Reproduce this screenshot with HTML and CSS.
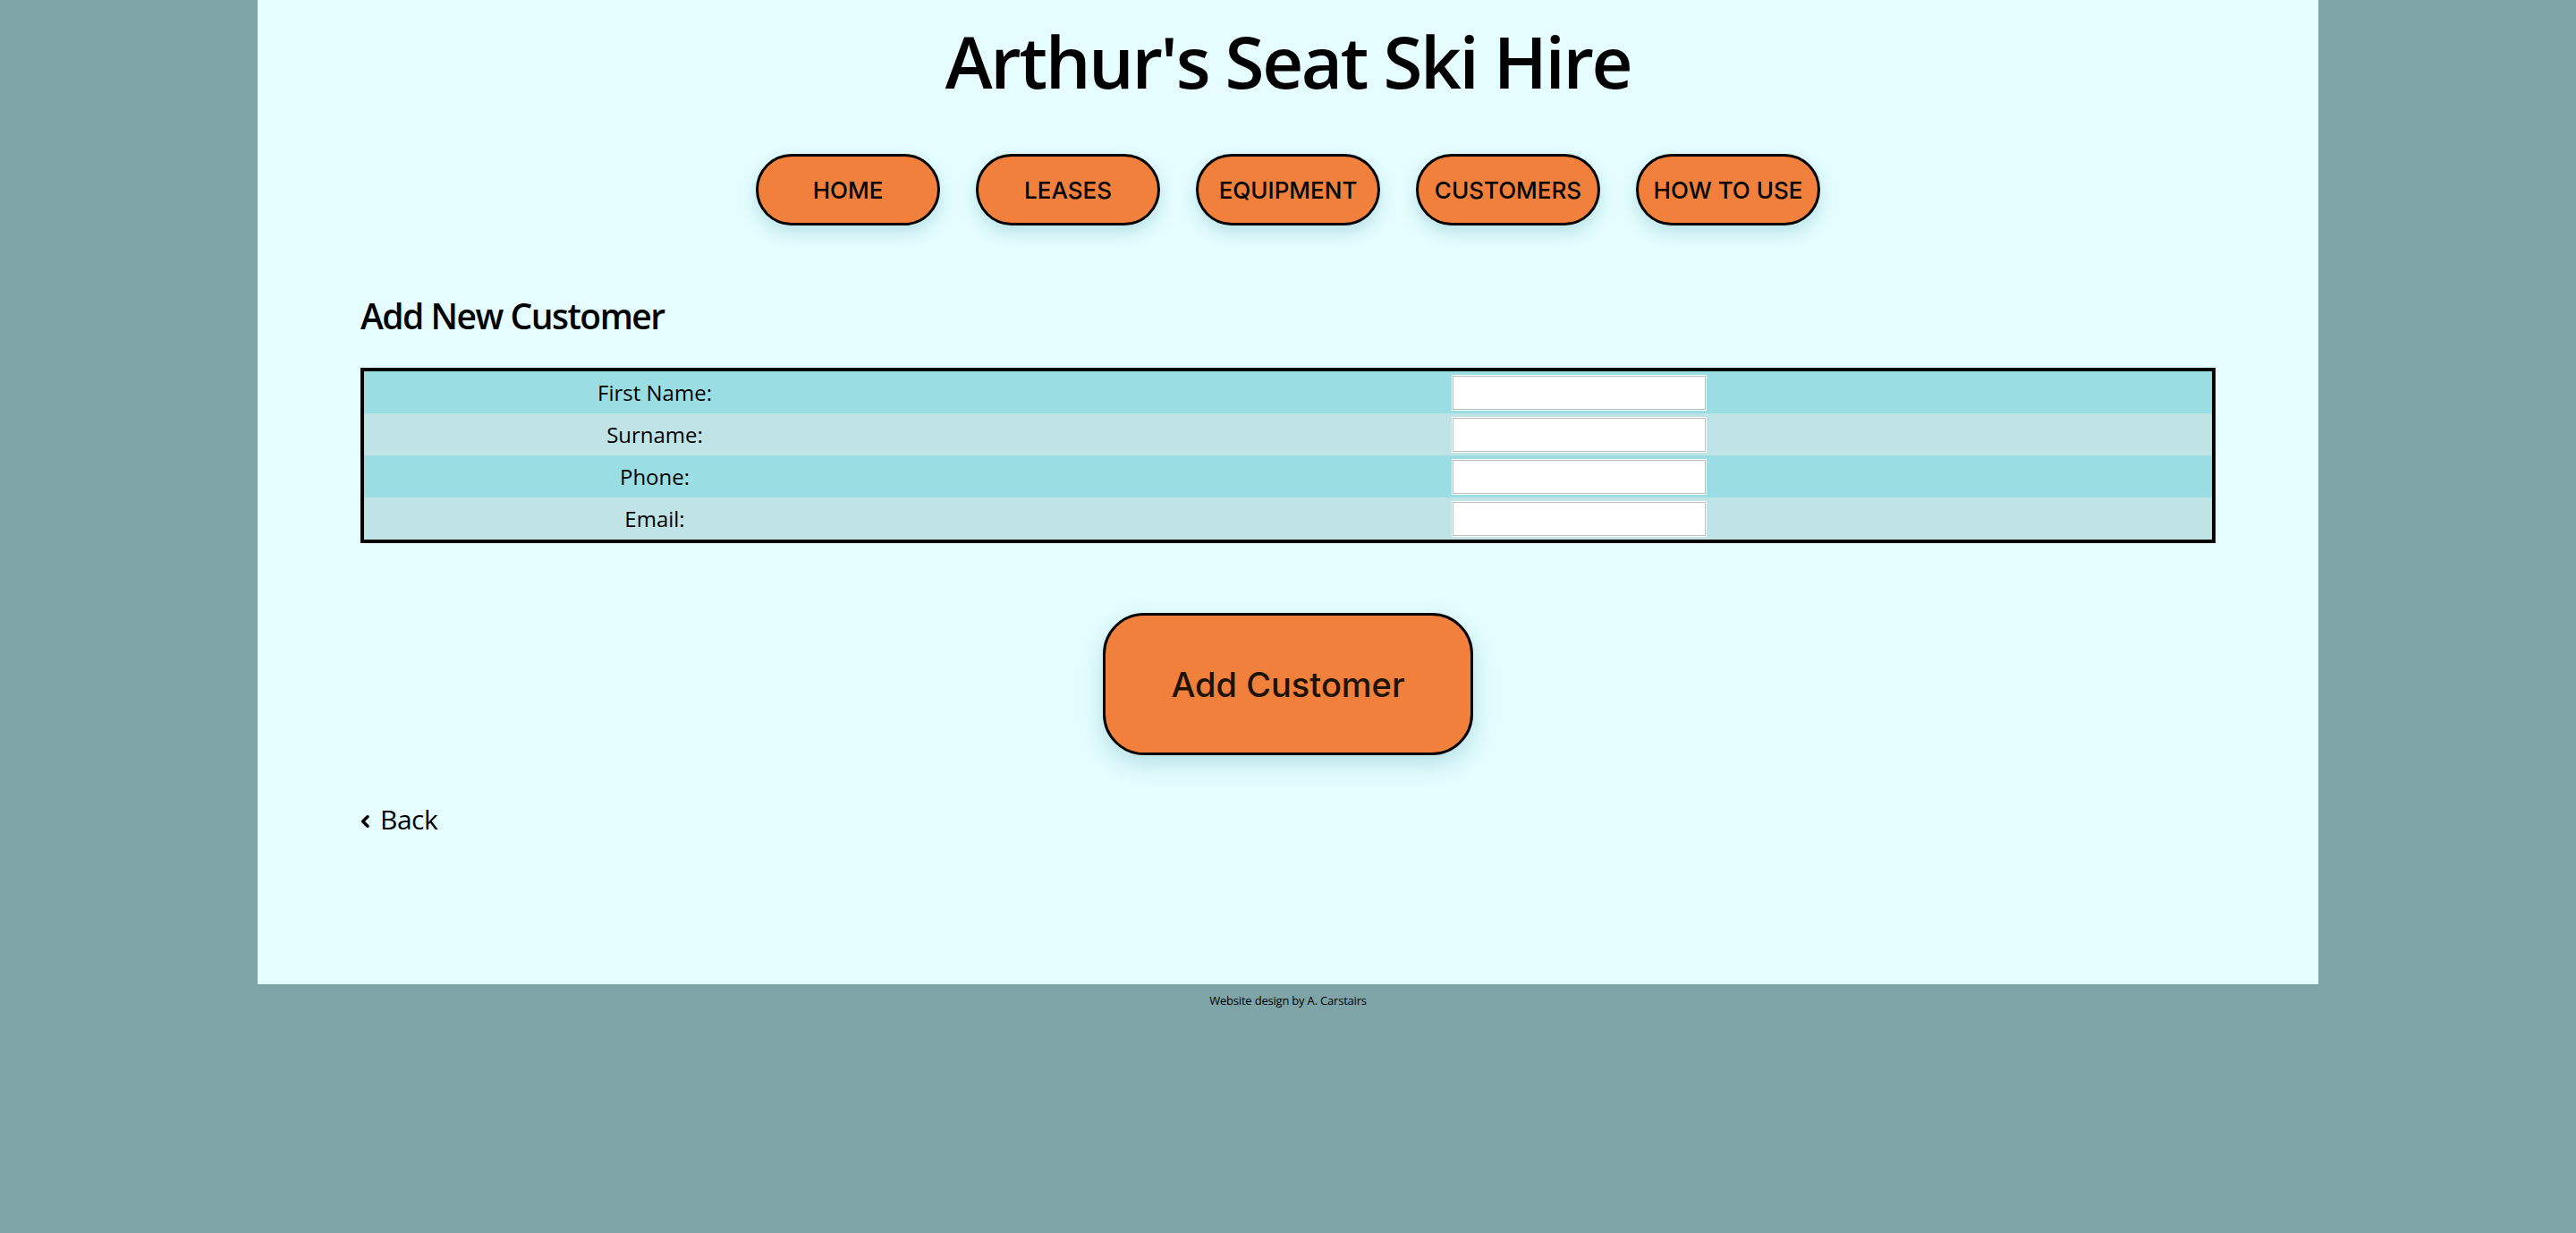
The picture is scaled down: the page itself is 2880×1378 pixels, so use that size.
FILE: index.html
```html
<!DOCTYPE html>
<html lang="en">
<head>
<meta charset="utf-8">
<title>Arthur's Seat Ski Hire - Add Customer</title>
<link rel="stylesheet" href="styles.css">
</head>
<body>
<div class="page">
  <header class="header">
    <h1 class="title">Arthur's Seat Ski Hire</h1>
    <nav class="nav">
      <a class="nav-btn" href="#">HOME</a>
      <a class="nav-btn" href="#">LEASES</a>
      <a class="nav-btn" href="#">EQUIPMENT</a>
      <a class="nav-btn" href="#">CUSTOMERS</a>
      <a class="nav-btn" href="#">HOW TO USE</a>
    </nav>
  </header>
  <main class="main">
    <h2 class="section-title">Add New Customer</h2>
    <form class="form">
      <div class="form-table">
        <div class="row row-odd"><label class="cell-label" for="fn">First Name:</label><div class="cell-input"><input id="fn" class="text-input" type="text"></div></div>
        <div class="row row-even"><label class="cell-label" for="sn">Surname:</label><div class="cell-input"><input id="sn" class="text-input" type="text"></div></div>
        <div class="row row-odd"><label class="cell-label" for="ph">Phone:</label><div class="cell-input"><input id="ph" class="text-input" type="text"></div></div>
        <div class="row row-even"><label class="cell-label" for="em">Email:</label><div class="cell-input"><input id="em" class="text-input" type="text"></div></div>
      </div>
      <div class="submit-wrap"><button class="submit" type="button">Add Customer</button></div>
    </form>
    <a class="back" href="#"><svg class="back-icon" viewBox="0 0 10 14" width="10" height="14"><path d="M8 1.8 L2.6 7 L8 12.2" fill="none" stroke="#000" stroke-width="3.4" stroke-linecap="round" stroke-linejoin="round"/></svg><span>Back</span></a>
  </main>
</div>
<footer class="footer">Website design by A. Carstairs</footer>
</body>
</html>
```

FILE: styles.css
```css
html, body {
  margin: 0;
  padding: 0;
}
body {
  background: #7ea4a8;
  font-family: "Open Sans", "Noto Sans", sans-serif;
  color: #000;
}
.page {
  width: 80%;
  margin: 0 auto;
  background: #e5fdff;
  height: 1100px;
  box-sizing: border-box;
  padding: 0 115px;
}
.header {
  display: flex;
  flex-direction: column;
  align-items: center;
}
.title {
  margin: 0;
  padding-top: 28px;
  font-size: 80px;
  line-height: 80px;
  font-weight: 600;
  letter-spacing: -2.4px;
}
.nav {
  display: flex;
  gap: 40px;
  margin-top: 64px;
}
.nav-btn {
  box-sizing: border-box;
  width: 206px;
  height: 80px;
  border: 3px solid #000;
  border-radius: 40px;
  background: #f0803c;
  color: #000;
  text-decoration: none;
  font-family: Inter, "Liberation Sans", sans-serif;
  font-weight: 500;
  font-size: 26px;
  display: flex;
  align-items: center;
  justify-content: center;
  box-shadow: 0 8px 18px rgba(60, 150, 160, 0.25);
}
.main {
  display: flex;
  flex-direction: column;
}
.section-title {
  margin: 77px 0 0;
  font-size: 39px;
  line-height: 48px;
  font-weight: 600;
  letter-spacing: -1.5px;
}
.form-table {
  margin-top: 34px;
  border: 4px solid #000;
  display: flex;
  flex-direction: column;
}
.row {
  display: grid;
  grid-template-columns: 650px 1fr;
  height: 47px;
  align-items: center;
}
.row-odd { background: #9adde3; }
.row-even { background: #c0e3e6; }
.cell-label {
  text-align: center;
  font-size: 24px;
}
.cell-input {
  display: flex;
  justify-content: center;
}
.text-input {
  box-sizing: border-box;
  width: 285px;
  height: 40px;
  background: #fff;
  border: 1px solid #fff;
  box-shadow: inset 0 0 0 1px #bdbdbd;
  margin: 0;
  padding: 0;
}
.submit-wrap {
  display: flex;
  justify-content: center;
  margin-top: 78px;
}
.submit {
  box-sizing: border-box;
  width: 414px;
  height: 159px;
  border: 3px solid #000;
  border-radius: 46px;
  background: #f0803c;
  color: #1e1200;
  font-family: Inter, "Liberation Sans", sans-serif;
  font-weight: 500;
  font-size: 38px;
  box-shadow: 0 10px 26px rgba(60, 150, 160, 0.28);
  padding: 0;
}
.back {
  margin-top: 52px;
  align-self: flex-start;
  display: flex;
  align-items: center;
  gap: 12px;
  color: #000;
  text-decoration: none;
  font-size: 30px;
  line-height: 40px;
  font-weight: 500;
  letter-spacing: -0.5px;
}
.back-icon {
  display: block;
  margin-top: 4px;
}
.footer {
  text-align: center;
  font-size: 13px;
  letter-spacing: -0.2px;
  padding-top: 9px;
}
```
